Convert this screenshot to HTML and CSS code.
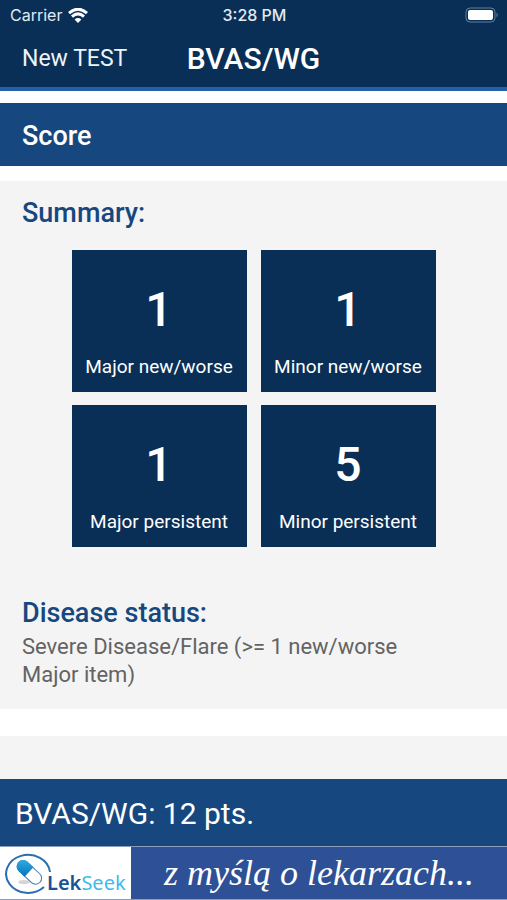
FILE: index.html
```html
<!DOCTYPE html>
<html lang="en">
<head>
    <meta charset="UTF-8">
    <meta name="viewport" content="width=device-width, initial-scale=1.0">
    <title>BVAS/WG</title>
    <link rel="stylesheet" href="styles.css">
</head>
<body>

    <header class="top">
        <div class="status-bar">
            <div class="carrier">
                <span>Carrier</span>
                <svg class="wifi" viewBox="0 0 20 15" aria-hidden="true">
                    <path d="M1 5.2 Q10 -2.8 19 5.2" />
                    <path d="M4 8.6 Q10 3.2 16 8.6" />
                    <path class="wifi-dot" d="M6.6 11.4 Q10 8.6 13.4 11.4 L10 15 Z" />
                </svg>
            </div>
            <span class="time">3:28 PM</span>
            <svg class="battery" viewBox="0 0 34 16" aria-hidden="true">
                <rect class="battery-case" x="1" y="1" width="29" height="14" rx="4" />
                <rect class="battery-level" x="3" y="3" width="25" height="10" rx="2" />
                <path class="battery-tip" d="M31.5 5.5 Q34 8 31.5 10.5 Z" />
            </svg>
        </div>
        <div class="nav-bar">
            <button type="button" class="new-test">New TEST</button>
            <h1>BVAS/WG</h1>
        </div>
    </header>

    <main>
        <h2 class="section-title">Score</h2>

        <section class="panel">
            <h3>Summary:</h3>
            <div class="tiles">
                <div class="tile">
                    <span class="count">1</span>
                    <span class="name">Major new/worse</span>
                </div>
                <div class="tile">
                    <span class="count">1</span>
                    <span class="name">Minor new/worse</span>
                </div>
                <div class="tile">
                    <span class="count">1</span>
                    <span class="name">Major persistent</span>
                </div>
                <div class="tile">
                    <span class="count">5</span>
                    <span class="name">Minor persistent</span>
                </div>
            </div>
            <h3>Disease status:</h3>
            <p class="disease">Severe Disease/Flare (&gt;= 1 new/worse Major item)</p>
        </section>

        <div class="next-panel"></div>
    </main>

    <footer>
        <div class="total">BVAS/WG: 12 pts.</div>
        <a class="banner" href="#">
            <span class="logo">
                <svg class="pill" viewBox="0 0 46 42" aria-hidden="true">
                    <defs>
                        <linearGradient id="pillBlue" x1="0" y1="0" x2="1" y2="1">
                            <stop offset="0" stop-color="#35b4e8" />
                            <stop offset="1" stop-color="#0873b8" />
                        </linearGradient>
                    </defs>
                    <path class="ring" d="M45 20 A22 19 0 1 0 39 35" />
                    <ellipse class="shadow" cx="19" cy="30" rx="6" ry="2" />
                    <g transform="translate(24 20) rotate(43)">
                        <rect class="pill-body" x="-14" y="-6" width="29" height="12" rx="6" />
                        <path fill="url(#pillBlue)" d="M0 -6.5 H-8 A6.5 6.5 0 0 0 -8 6.5 H0 Z" />
                    </g>
                </svg>
                <span class="logo-text">Lek<span class="seek">Seek</span></span>
            </span>
            <span class="slogan" lang="pl">z myślą o lekarzach...</span>
        </a>
    </footer>

</body>
</html>
```
FILE: styles.css
```css
* {
    box-sizing: border-box;
}
body {
    margin: 0;
    min-height: 100vh;
    display: flex;
    flex-direction: column;
    font-family: Roboto, "Liberation Sans", sans-serif;
    background: white;
}
h1, h2, h3, p {
    margin: 0;
    font-weight: 500;
}
.top {
    background: #092f57;
    border-bottom: 4px solid #2560a8;
    color: white;
}
.status-bar {
    display: grid;
    grid-template-columns: 1fr auto 1fr;
    align-items: center;
    height: 30px;
    padding: 0 8px 0 10px;
    font-family: Inter, sans-serif;
    font-size: 16px;
    color: #e4eaf1;
}
.carrier {
    display: flex;
    align-items: center;
    gap: 6px;
}
.wifi {
    width: 20px;
    height: 15px;
    fill: none;
    stroke: white;
    stroke-width: 3;
}
.wifi .wifi-dot {
    fill: white;
    stroke: none;
}
.time {
    font-weight: 500;
}
.battery {
    justify-self: end;
    width: 34px;
    height: 16px;
}
.battery-case {
    fill: none;
    stroke: #64809d;
    stroke-width: 1;
}
.battery-level {
    fill: white;
}
.battery-tip {
    fill: #64809d;
}
.nav-bar {
    display: grid;
    grid-template-columns: 1fr auto 1fr;
    align-items: center;
    height: 57px;
    padding: 0 22px;
}
.new-test {
    justify-self: start;
    padding: 0;
    border: none;
    background: none;
    color: #eef3f8;
    font-family: inherit;
    font-size: 23px;
    cursor: pointer;
}
h1 {
    font-size: 30px;
}
main {
    flex: 1;
    display: flex;
    flex-direction: column;
    padding-top: 12px;
}
.section-title {
    padding: 17px 22px 14px;
    margin-bottom: 15px;
    background: #16487f;
    color: white;
    font-size: 27px;
    line-height: 32px;
}
.panel {
    padding: 16px 22px 20px;
    margin-bottom: 27px;
    background: #f4f4f4;
}
h3 {
    color: #16487f;
    font-size: 27px;
    line-height: 32px;
}
.tiles {
    display: grid;
    grid-template-columns: repeat(2, 175px);
    justify-content: center;
    gap: 13px 14px;
    margin: 21px 0 50px;
}
.tile {
    display: flex;
    flex-direction: column;
    align-items: center;
    padding: 32px 0 13px;
    background: #092f57;
    color: white;
}
.count {
    font-size: 48px;
    font-weight: 500;
    line-height: 56px;
}
.name {
    margin-top: 16px;
    font-size: 19px;
    line-height: 25px;
}
.disease {
    max-width: 400px;
    margin-top: 4px;
    color: #636363;
    font-size: 22px;
    font-weight: 400;
    line-height: 28px;
}
.next-panel {
    flex: 1;
    min-height: 43px;
    background: #f4f4f4;
}
.total {
    padding: 17px 15px 15px;
    background: #16487f;
    color: white;
    font-size: 30px;
    line-height: 35px;
}
.banner {
    display: flex;
    height: 54px;
    border-top: 1px solid #8d9cb9;
    border-bottom: 1px solid #8d9cb9;
    text-decoration: none;
}
.logo {
    display: flex;
    align-items: flex-end;
    width: 131px;
    padding: 0 0 5px 5px;
    background: white;
}
.pill {
    flex: none;
    width: 46px;
    height: 42px;
}
.ring {
    fill: none;
    stroke: #2c6eb0;
    stroke-width: 2;
}
.shadow {
    fill: #d5d5d5;
}
.pill-body {
    fill: white;
    stroke: #3b7ab5;
    stroke-width: 1;
}
.logo-text {
    margin-left: -4px;
    color: #17539a;
    font-family: "Noto Sans", sans-serif;
    font-size: 20px;
    font-weight: 600;
    line-height: 22px;
}
.seek {
    color: #3cbcec;
    font-weight: 400;
}
.slogan {
    flex: 1;
    background: #2d5096;
    color: white;
    font-family: "Liberation Serif", serif;
    font-size: 36px;
    font-style: italic;
    line-height: 52px;
    text-align: center;
}
```
